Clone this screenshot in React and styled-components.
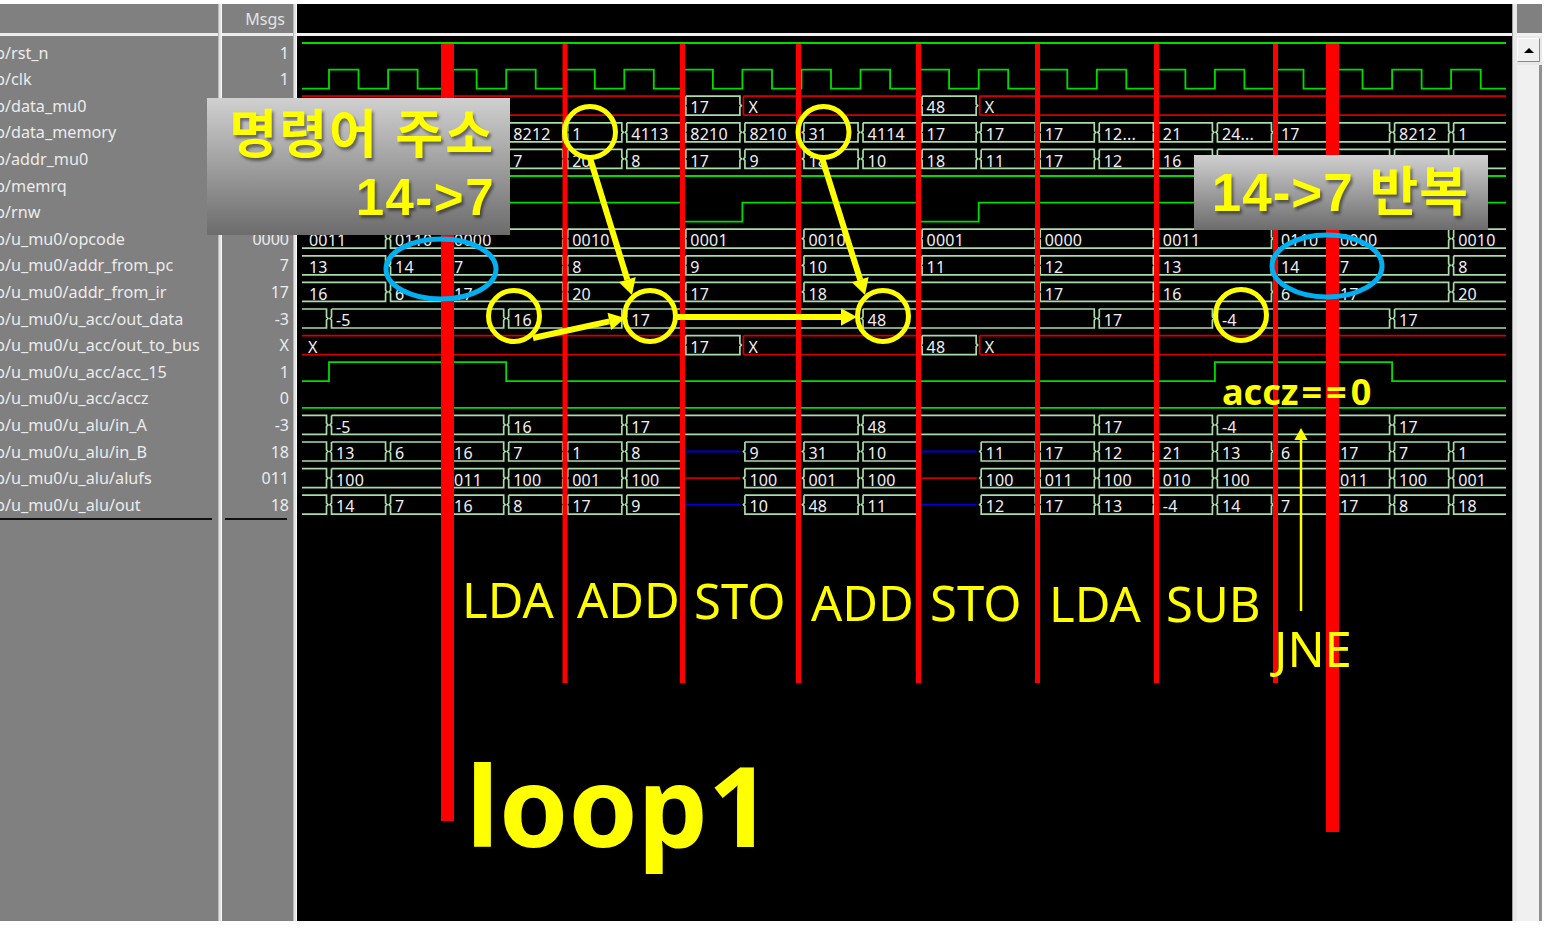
import React from "react";
import styled, { createGlobalStyle } from "styled-components";

const GlobalStyle = createGlobalStyle`
  html, body {
    margin: 0;
    padding: 0;
    background: #ffffff;
    overflow: hidden;
  }
`;

const signals = [
  ["/rst_n", "1"],
  ["/clk", "1"],
  ["/data_mu0", ""],
  ["/data_memory", ""],
  ["/addr_mu0", ""],
  ["/memrq", ""],
  ["/rnw", ""],
  ["/u_mu0/opcode", "0000"],
  ["/u_mu0/addr_from_pc", "7"],
  ["/u_mu0/addr_from_ir", "17"],
  ["/u_mu0/u_acc/out_data", "-3"],
  ["/u_mu0/u_acc/out_to_bus", "X"],
  ["/u_mu0/u_acc/acc_15", "1"],
  ["/u_mu0/u_acc/accz", "0"],
  ["/u_mu0/u_alu/in_A", "-3"],
  ["/u_mu0/u_alu/in_B", "18"],
  ["/u_mu0/u_alu/alufs", "011"],
  ["/u_mu0/u_alu/out", "18"],
];

// bus rows: [row, [[start tick, label], ...]]  tick -1 = left edge of the pane
const X = "X!";
const Z = "Z!";
const U = "U!";
const buses = [
  [2, [[-1, X], [12, "17"], [14, X], [20, "48"], [22, X]]],
  [3, [[-1, ""], [6, "8212"], [8, "1"], [10, "4113"], [12, "8210"], [14, "8210"], [16, "31"], [18, "4114"], [20, "17"], [22, "17"], [24, "17"], [26, "12..."], [28, "21"], [30, "24..."], [32, "17"], [36, "8212"], [38, "1"]]],
  [4, [[-1, ""], [6, "7"], [8, "20"], [10, "8"], [12, "17"], [14, "9"], [16, "18"], [18, "10"], [20, "18"], [22, "11"], [24, "17"], [26, "12"], [28, "16"], [30, "13"], [36, "7"], [38, "20"]]],
  [7, [[-1, "0011"], [2, "0110"], [4, "0000"], [8, "0010"], [12, "0001"], [16, "0010"], [20, "0001"], [24, "0000"], [28, "0011"], [32, "0110"], [34, "0000"], [38, "0010"]]],
  [8, [[-1, "13"], [2, "14"], [4, "7"], [8, "8"], [12, "9"], [16, "10"], [20, "11"], [24, "12"], [28, "13"], [32, "14"], [34, "7"], [38, "8"]]],
  [9, [[-1, "16"], [2, "6"], [4, "17"], [8, "20"], [12, "17"], [16, "18"], [24, "17"], [28, "16"], [32, "6"], [34, "17"], [38, "20"]]],
  [10, [[-1, ""], [0, "-5"], [6, "16"], [10, "17"], [18, "48"], [26, "17"], [30, "-4"], [36, "17"]]],
  [11, [[-1, X], [12, "17"], [14, X], [20, "48"], [22, X]]],
  [14, [[-1, ""], [0, "-5"], [6, "16"], [10, "17"], [18, "48"], [26, "17"], [30, "-4"], [36, "17"]]],
  [15, [[-1, ""], [0, "13"], [2, "6"], [4, "16"], [6, "7"], [8, "1"], [10, "8"], [12, Z], [14, "9"], [16, "31"], [18, "10"], [20, Z], [22, "11"], [24, "17"], [26, "12"], [28, "21"], [30, "13"], [32, "6"], [34, "17"], [36, "7"], [38, "1"]]],
  [16, [[-1, ""], [0, "100"], [4, "011"], [6, "100"], [8, "001"], [10, "100"], [12, U], [14, "100"], [16, "001"], [18, "100"], [20, U], [22, "100"], [24, "011"], [26, "100"], [28, "010"], [30, "100"], [34, "011"], [36, "100"], [38, "001"]]],
  [17, [[-1, ""], [0, "14"], [2, "7"], [4, "16"], [6, "8"], [8, "17"], [10, "9"], [12, Z], [14, "10"], [16, "48"], [18, "11"], [20, Z], [22, "12"], [24, "17"], [26, "13"], [28, "-4"], [30, "14"], [32, "7"], [34, "17"], [36, "8"], [38, "18"]]],
];

// single-bit rows: [row, starts high?, ticks where it toggles]
const clkTicks = Array.from({ length: 40 }, (_, i) => i);
const bits = [
  [0, true, []],
  [1, false, clkTicks],
  [5, true, []],
  [6, true, [12, 14, 20, 22]],
  [12, false, [0, 6, 30, 36]],
  [13, null, []],
];

const LEFT = 302;
const RIGHT = 1506;
const tickX = (k) => (k < 0 ? LEFT : 329 + 29.53 * k);
const rowTop = (r) => 44 + 26.6 * r;
const ROW_H = 19;

// labels sitting fully under a grey callout are not drawn
const isCovered = (x, y) =>
  (x >= 207 && x < 510 && y > 98 && y < 235) ||
  (x >= 1194 && x < 1488 && y > 155 && y < 230);

const bitPath = (row, startHigh, ticks) => {
  const hi = rowTop(row);
  const lo = hi + ROW_H;
  if (startHigh === null) return `M${LEFT} ${lo}H${RIGHT}`;
  let high = startHigh;
  let d = `M${LEFT} ${high ? hi : lo}`;
  ticks.forEach((k) => {
    high = !high;
    d += `H${tickX(k).toFixed(1)}V${high ? hi : lo}`;
  });
  return d + `H${RIGHT}`;
};

const busPath = (y, x0, x1, first, last) => {
  const b = y + ROW_H;
  const mid = y + ROW_H / 2;
  const l = first ? x0 : x0 + 1;
  const r = last ? x1 : x1 - 1;
  const open = first ? `M${l} ${y}` : `M${l + 1.5} ${y}`;
  const top = last
    ? `H${r}M${r} ${b}`
    : `H${r - 1.5}V${mid - 1.5}L${r} ${mid}L${r - 1.5} ${mid + 1.5}V${b}`;
  const bottom = first
    ? `H${l}`
    : `H${l + 1.5}V${mid + 1.5}L${l} ${mid}L${l + 1.5} ${mid - 1.5}V${y}`;
  return `${open}${top}${bottom}`;
};

const xPath = (y, x0, x1, first, last) => {
  const b = y + ROW_H;
  const l = first ? x0 : x0 + 1;
  const r = last ? x1 : x1 - 1.5;
  return `M${l} ${y}H${r}M${l} ${b}H${r}${first ? "" : `M${l} ${y}V${b}`}`;
};

const SegLabel = ({ x, y, children }) =>
  isCovered(x, y) ? null : <WaveText x={x} y={y}>{children}</WaveText>;

const Waves = () => (
  <WaveSvg viewBox="297 37 1215 884">
    {bits.map(([row, high, ticks]) => (
      <path
        key={row}
        d={bitPath(row, high, ticks)}
        fill="none"
        stroke="#00dc00"
        strokeWidth="1.8"
      />
    ))}
    {buses.map(([row, segs]) =>
      segs.map(([k, label], i) => {
        const first = i === 0;
        const last = i === segs.length - 1;
        const x0 = tickX(k);
        const x1 = last ? RIGHT : tickX(segs[i + 1][0]);
        const y = rowTop(row);
        if (label === Z || label === U) {
          return (
            <path
              key={`${row}-${k}`}
              d={`M${x0 + 2} ${y + 9.5}H${x1 - 2}`}
              stroke={label === Z ? "#0000d8" : "#c80000"}
              strokeWidth="1.8"
            />
          );
        }
        if (label === X) {
          return (
            <g key={`${row}-${k}`}>
              <path d={xPath(y, x0, x1, first, last)} fill="none" stroke="#d40000" strokeWidth="1.8" />
              <SegLabel x={x0 + 6} y={y + 17.2}>X</SegLabel>
            </g>
          );
        }
        return (
          <g key={`${row}-${k}`}>
            <path d={busPath(y, x0, x1, first, last)} fill="none" stroke="#a8dca8" strokeWidth="1.7" />
            {label && <SegLabel x={x0 + 7} y={y + 17.2}>{label}</SegLabel>}
          </g>
        );
      })
    )}
  </WaveSvg>
);

const thinBars = [562.5, 680, 796, 916, 1035, 1154, 1273];
const circles = [
  [590, 132],
  [823.5, 132],
  [650, 316],
  [883, 316],
  [514, 316],
  [1241, 315],
];

const Arrow = ({ x1, y1, x2, y2, width = 6, head = 16 }) => {
  const len = Math.hypot(x2 - x1, y2 - y1);
  const ux = (x2 - x1) / len;
  const uy = (y2 - y1) / len;
  const bx = x2 - ux * head;
  const by = y2 - uy * head;
  const hw = head * 0.55;
  return (
    <g fill="#ffff00" stroke="#ffff00">
      <line x1={x1} y1={y1} x2={bx} y2={by} strokeWidth={width} />
      <polygon
        stroke="none"
        points={`${x2},${y2} ${bx - uy * hw},${by + ux * hw} ${bx + uy * hw},${by - ux * hw}`}
      />
    </g>
  );
};

const Marks = () => (
  <MarkSvg viewBox="0 0 1544 921">
    <rect x="441" y="44" width="13" height="777" fill="#ff0000" />
    <rect x="1326" y="44" width="13" height="788" fill="#ff0000" />
    {thinBars.map((x) => (
      <rect key={x} x={x} y="44" width="5" height="639" fill="#ff0000" />
    ))}
    <ellipse cx="441" cy="269" rx="55" ry="30" fill="none" stroke="#00b0f0" strokeWidth="5" />
    <ellipse cx="1327" cy="266" rx="55" ry="31" fill="none" stroke="#00b0f0" strokeWidth="5" />
    {circles.map(([cx, cy]) => (
      <circle key={cx} cx={cx} cy={cy} r="25.5" fill="none" stroke="#ffff00" strokeWidth="5" />
    ))}
    <Arrow x1={590} y1={158} x2={632} y2={295} />
    <Arrow x1={822} y1={158} x2={865} y2={295} />
    <Arrow x1={533} y1={338} x2={625} y2={318} />
    <Arrow x1={677} y1={317} x2={857} y2={317} />
    <Arrow x1={1301} y1={611} x2={1301} y2={428} width={2.5} head={12} />
  </MarkSvg>
);

const App = () => (
  <>
    <GlobalStyle />
    <Window>
      <Pane>
        <PaneHeader />
        <RowList $gap={6}>
          {signals.map(([name]) => (
            <NameRow key={name}>p{name}</NameRow>
          ))}
        </RowList>
      </Pane>
      <Splitter />
      <Pane>
        <PaneHeader $align="flex-end">Msgs</PaneHeader>
        <RowList $gap={6} $inset={3}>
          {signals.map(([name, value]) => (
            <ValueRow key={name}>{value}</ValueRow>
          ))}
        </RowList>
      </Pane>
      <Splitter />
      <WavePane>
        <WaveHeader />
        <Waves />
      </WavePane>
      <ScrollColumn>
        <ScrollHead />
        <ScrollButton>
          <UpArrow />
        </ScrollButton>
        <ScrollTrack />
      </ScrollColumn>

      <Marks />

      <CalloutBox $x={207} $y={98} $w={303} $h={137} $pad={15}>
        <CalloutLine $size={52} $spacing={2} $lift={-1}>명령어 주소</CalloutLine>
        <CalloutLine $size={51} $spacing={1.5}>14-&gt;7</CalloutLine>
      </CalloutBox>
      <CalloutBox $x={1194} $y={155} $w={294} $h={75} $pad={19}>
        <CalloutLine $size={53} $spacing={1}>14-&gt;7 반복</CalloutLine>
      </CalloutBox>

      <AccLabel>accz<AccEquals>==</AccEquals>0</AccLabel>

      <OpLabel $x={462} $y={565}>LDA</OpLabel>
      <OpLabel $x={577} $y={565}>ADD</OpLabel>
      <OpLabel $x={694} $y={566}>STO</OpLabel>
      <OpLabel $x={811} $y={568}>ADD</OpLabel>
      <OpLabel $x={930} $y={568}>STO</OpLabel>
      <OpLabel $x={1049} $y={569}>LDA</OpLabel>
      <OpLabel $x={1166} $y={569}>SUB</OpLabel>
      <OpLabel $x={1274} $y={614}>JNE</OpLabel>

      <LoopLabel>loop1</LoopLabel>
    </Window>
  </>
);

const Window = styled.div`
  position: relative;
  box-sizing: border-box;
  width: 1544px;
  height: 921px;
  padding-top: 4px;
  display: grid;
  grid-template-columns: 218px 4px 71px 4px 1215px 32px;
  overflow: hidden;
  background: #ffffff;
  font-family: "Noto Sans", sans-serif;
`;

const Pane = styled.div`
  display: flex;
  flex-direction: column;
  background: #808080;
  overflow: hidden;
`;

const Splitter = styled.div`
  background: #e4e4e4;
  border-left: 1px solid #b8b8b8;
  border-right: 1px solid #f8f8f8;
`;

const PaneHeader = styled.div`
  height: 29px;
  flex: none;
  display: flex;
  align-items: center;
  justify-content: ${(p) => p.$align || "flex-start"};
  padding-right: 8px;
  border-bottom: 3px solid #ececec;
  color: #e4e4e4;
  font-size: 16px;
`;

const RowList = styled.div`
  padding-top: 3.7px;
  margin-left: ${(p) => p.$inset || 0}px;
  margin-right: ${(p) => p.$gap}px;
  border-bottom: 2px solid #111111;
`;

const NameRow = styled.div`
  height: 26.6px;
  line-height: 27.4px;
  margin-left: -5px;
  color: #ececec;
  font-size: 16.2px;
  white-space: nowrap;
`;

const ValueRow = styled.div`
  height: 26.6px;
  line-height: 27.4px;
  margin-right: -2px;
  text-align: right;
  color: #ececec;
  font-size: 16px;
`;

const WavePane = styled.div`
  display: flex;
  flex-direction: column;
  background: #000000;
  overflow: hidden;
`;

const WaveHeader = styled.div`
  height: 29px;
  flex: none;
  border-bottom: 3px solid #f0f0f0;
`;

const WaveSvg = styled.svg`
  display: block;
  width: 1215px;
  height: 884px;
  flex: none;
`;

const WaveText = styled.text`
  fill: #f0f0f0;
  font-family: "Noto Sans", sans-serif;
  font-size: 16px;
  letter-spacing: 0.2px;
`;

const ScrollColumn = styled.div`
  display: flex;
  flex-direction: column;
  padding-left: 4px;
  background: #e8e8e8;
  border-left: 1px solid #a0a0a0;
  box-sizing: border-box;
  width: 30px;
`;

const ScrollHead = styled.div`
  height: 29px;
  flex: none;
  background: #808080;
  border-bottom: 3px solid #f0f0f0;
`;

const ScrollButton = styled.div`
  box-sizing: border-box;
  width: 23px;
  height: 24px;
  margin-top: 2px;
  flex: none;
  display: flex;
  align-items: center;
  justify-content: center;
  background: #f0f0f0;
  border: 1px solid;
  border-color: #ffffff #8a8a8a #8a8a8a #ffffff;
`;

const UpArrow = styled.span`
  width: 0;
  height: 0;
  border-left: 5px solid transparent;
  border-right: 5px solid transparent;
  border-bottom: 5px solid #000000;
`;

const ScrollTrack = styled.div`
  flex: 1;
  margin-top: 3px;
  background: #f0f0f0;
  border-right: 3px solid #909090;
`;

const MarkSvg = styled.svg`
  position: absolute;
  left: 0;
  top: 0;
  width: 1544px;
  height: 921px;
  pointer-events: none;
`;

const CalloutBox = styled.div`
  position: absolute;
  left: ${(p) => p.$x}px;
  top: ${(p) => p.$y}px;
  box-sizing: border-box;
  width: ${(p) => p.$w}px;
  height: ${(p) => p.$h}px;
  padding-right: ${(p) => p.$pad}px;
  display: flex;
  flex-direction: column;
  align-items: flex-end;
  justify-content: center;
  background: linear-gradient(#d0d0d0, #6c6c6c);
`;

const CalloutLine = styled.div`
  margin-top: ${(p) => p.$lift || 0}px;
  color: #ffff00;
  font-family: "Liberation Sans", "Noto Sans CJK KR", sans-serif;
  font-size: ${(p) => p.$size}px;
  font-weight: 700;
  line-height: 1.2;
  letter-spacing: ${(p) => p.$spacing || 0}px;
  white-space: nowrap;
  text-shadow: 2px 3px 3px rgba(0, 0, 0, 0.45);
`;

const AccLabel = styled.div`
  position: absolute;
  left: 1222px;
  top: 368px;
  color: #ffff00;
  font-family: "Noto Sans", sans-serif;
  font-size: 36px;
  font-weight: 700;
  line-height: 48px;
  white-space: nowrap;
`;

const AccEquals = styled.span`
  letter-spacing: 4px;
  margin-left: 3px;
`;

const OpLabel = styled.div`
  position: absolute;
  left: ${(p) => p.$x}px;
  top: ${(p) => p.$y}px;
  color: #ffff00;
  font-family: "Noto Sans", sans-serif;
  font-size: 49px;
  line-height: 68px;
`;

const LoopLabel = styled.div`
  position: absolute;
  left: 466px;
  top: 724px;
  color: #ffff00;
  font-family: "Noto Sans", sans-serif;
  font-size: 111px;
  font-weight: 700;
  line-height: 160px;
`;

export default App;
